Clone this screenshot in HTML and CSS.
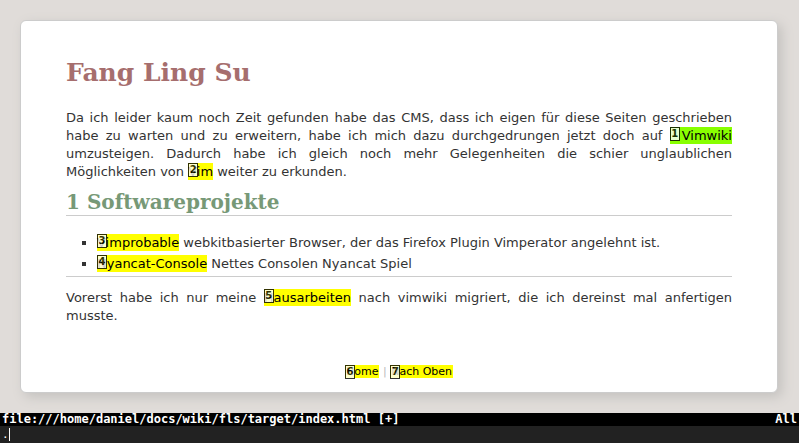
FILE: index.html
```html
<!DOCTYPE html>
<html lang="de">
<head>
<meta charset="utf-8">
<title>Fang Ling Su</title>
<link rel="stylesheet" href="styles.css">
</head>
<body>
<main class="page">
  <article class="card">
    <h1>Fang Ling Su</h1>
    <p>Da ich leider kaum noch Zeit gefunden habe das CMS, dass ich eigen für diese Seiten geschrieben habe zu warten und zu erweitern, habe ich mich dazu durchgedrungen jetzt doch auf <a class="link active lead" href="#vimwiki"><span class="hint">1</span>Vimwiki</a> umzusteigen. Dadurch habe ich gleich noch mehr Gelegenheiten die schier unglaublichen Möglichkeiten von <a class="link" href="#vim"><span class="hint">2</span>Vim</a> weiter zu erkunden.</p>
    <h2>1 Softwareprojekte</h2>
    <ul>
      <li><a class="link" href="#vimprobable"><span class="hint">3</span>Vimprobable</a> webkitbasierter Browser, der das Firefox Plugin Vimperator angelehnt ist.</li>
      <li><a class="link" href="#nyancat"><span class="hint">4</span>Nyancat-Console</a> Nettes Consolen Nyancat Spiel</li>
    </ul>
    <hr>
    <p>Vorerst habe ich nur meine <a class="link" href="#hausarbeiten"><span class="hint">5</span>Hausarbeiten</a> nach vimwiki migriert, die ich dereinst mal anfertigen musste.</p>
    <footer><a class="link" href="#home"><span class="hint">6</span>Home</a> | <a class="link" href="#top"><span class="hint">7</span>Nach Oben</a></footer>
  </article>
</main>
<div class="status"><span>file:///home/daniel/docs/wiki/fls/target/index.html [+]</span><span>All</span></div>
<div class="prompt"><input class="command" type="text" value="." aria-label="Befehl"><span class="caret"></span></div>
</body>
</html>
```

FILE: styles.css
```css
* { box-sizing: border-box; }
body {
  margin: 0;
  min-height: 100vh;
  display: flex;
  flex-direction: column;
  background: #e0dcd9;
  color: #333;
  font: 13px/18px "DejaVu Sans", sans-serif;
}
.page { flex: 1; padding: 20px 21px 20px 20px; }
.card {
  padding: 36px 45px 11px;
  background: #fff;
  border: 1px solid #ccc;
  border-radius: 6px;
  box-shadow: 4px 4px 12px #c4c2bf;
}
h1, h2 { font-family: "DejaVu Serif", serif; font-weight: bold; }
h1 { margin: 0 0 20px; color: #a66e6e; font-size: 25px; line-height: 32px; }
h2 {
  margin: 9px 0 16px;
  border-bottom: 1px solid #ccc;
  color: #779977;
  font-size: 20px;
  line-height: 25px;
}
p { margin: 0; text-align: justify; }
ul { margin: 0; padding: 0 0 0 31px; list-style: square; line-height: 21px; }
hr { margin: 2px 0 12px; border: 0; border-top: 1px solid #ccc; }
footer { margin-top: 38px; color: #bbb; font-size: 11px; text-align: center; }
.link {
  position: relative;
  padding: 1px 0;
  background: #ff0;
  color: #000;
  text-decoration: none;
}
footer .link { padding: 0 1px; }
.link.active { background: #8f0; }
.link.lead { padding-left: 12px; }
.hint {
  position: absolute;
  top: 0;
  left: 0;
  width: 10px;
  height: 14px;
  border: 1px solid #000;
  background: #fff;
  font: bold 10px/12px "DejaVu Sans", sans-serif;
  text-align: center;
  opacity: 0.8;
}
.status {
  display: flex;
  justify-content: space-between;
  padding: 0 2px;
  background: #000;
  color: #fff;
  font: bold 12px/13px "DejaVu Sans Mono", monospace;
}
.prompt { position: relative; display: flex; background: #222; }
.command {
  flex: 1;
  height: 17px;
  padding: 0 2px;
  border: 0;
  outline: 0;
  background: #222;
  color: #fff;
  font: 11px/17px "DejaVu Sans Mono", monospace;
}
.caret { position: absolute; top: 2px; left: 9px; width: 1px; height: 13px; background: #fff; }
```
